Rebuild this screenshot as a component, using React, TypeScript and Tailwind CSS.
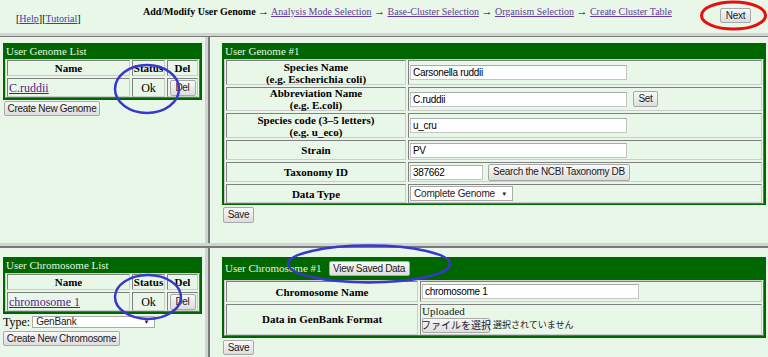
import React from "react";

const SANS = "font-['Liberation_Sans','Noto_Sans_CJK_JP',Arial,sans-serif]";

function Btn({ className = "", children }: { className?: string; children?: React.ReactNode }) {
  return (
    <button
      className={`flex shrink-0 items-center justify-center whitespace-nowrap rounded-[2px] border border-[#a8a8a8] bg-linear-to-b from-[#f9f9f9] to-[#dddddd] p-0 text-[10px] leading-none tracking-[-0.3px] text-[#1a1a1a] font-['Liberation_Sans','Noto_Sans_CJK_JP',Arial,sans-serif] ${className}`}
    >
      {children}
    </button>
  );
}

function Input({ value, className = "" }: { value: string; className?: string }) {
  return (
    <input
      readOnly
      value={value}
      className={`block shrink-0 border border-[#c4c4c4] border-t-[#aaaaaa] bg-white px-[2px] text-[10px] tracking-[-0.3px] text-black outline-none font-['Liberation_Sans',Arial,sans-serif] ${className}`}
    />
  );
}

function Select({ value, className = "" }: { value: string; className?: string }) {
  return (
    <div
      className={`flex shrink-0 items-center justify-between border border-[#aaaaaa] bg-white pl-[3px] pr-[5px] text-[10px] tracking-[-0.2px] text-[#222] font-['Liberation_Sans',Arial,sans-serif] ${className}`}
    >
      <span>{value}</span>
      <span className="text-[6px] leading-none">▼</span>
    </div>
  );
}

function Cell({ className = "", children }: { className?: string; children?: React.ReactNode }) {
  return (
    <div
      className={`flex items-center border border-t-[#808080] border-l-[#808080] border-b-[#cccccc] border-r-[#cccccc] ${className}`}
    >
      {children}
    </div>
  );
}

function TableBox({ className = "", children }: { className?: string; children?: React.ReactNode }) {
  return (
    <div
      className={`flex flex-col gap-[2px] border border-t-[#cccccc] border-l-[#cccccc] border-b-[#6a6a6a] border-r-[#6a6a6a] bg-[#e8f7e8] ${className}`}
    >
      {children}
    </div>
  );
}

function PanelHeader({ children }: { children: React.ReactNode }) {
  return <div className="h-[16px] pl-[1px] text-[11px] leading-[16px] text-[#e4f4e4]">{children}</div>;
}

function ListPanel({ title, name }: { title: string; name: string }) {
  return (
    <div className="w-[199px] bg-[#006600] px-[2px] pb-[2px]">
      <PanelHeader>{title}</PanelHeader>
      <TableBox className="px-[1px]">
        <div className="flex gap-[2px]">
          <Cell className="h-[16px] w-[123px] justify-center text-[11px] font-bold">Name</Cell>
          <Cell className="h-[16px] w-[33px] justify-center overflow-visible whitespace-nowrap text-[11px] font-bold">
            Status
          </Cell>
          <Cell className="h-[16px] w-[31px] justify-center text-[11px] font-bold">Del</Cell>
        </div>
        <div className="flex gap-[2px]">
          <Cell className="h-[19px] w-[123px] justify-start pl-[1px] text-[12px]">
            <a className="text-[#551a8b] underline">{name}</a>
          </Cell>
          <Cell className="h-[19px] w-[33px] justify-center text-[12px]">Ok</Cell>
          <Cell className="h-[19px] w-[31px] justify-center">
            <Btn className="h-[16px] w-[26px]">Del</Btn>
          </Cell>
        </div>
      </TableBox>
    </div>
  );
}

function FormRow({
  label,
  labelW,
  h,
  children,
}: {
  label: React.ReactNode;
  labelW: string;
  h: string;
  children?: React.ReactNode;
}) {
  return (
    <div className="flex gap-[2px]">
      <Cell className={`${labelW} ${h} justify-center text-center text-[11px] font-bold leading-[12px]`}>
        <div>{label}</div>
      </Cell>
      <Cell className={`${h} flex-1 gap-[6px] pl-[1px]`}>{children}</Cell>
    </div>
  );
}

export default function App() {
  return (
    <div className="relative flex h-[357px] w-[768px] flex-col overflow-hidden bg-[#e8f7e8] font-['Liberation_Serif',serif] text-black">
      {/* top frame */}
      <div className="flex h-[33px] shrink-0 items-start">
        <div className="w-[143px] shrink-0 pl-[16px] pt-[13px] text-[10px] leading-[12px]">
          [<a className="text-[#3a3ac8] underline">Help</a>][<a className="text-[#3a3ac8] underline">Tutorial</a>]
        </div>
        <div className="whitespace-nowrap pt-[5px] text-[10px] leading-[12px]">
          <b>Add/Modify User Genome</b> <span className="text-[11px]">→</span>{" "}
          <a className="text-[#5e3c9e] underline">Analysis Mode Selection</a> <span className="text-[11px]">→</span>{" "}
          <a className="text-[#5e3c9e] underline">Base-Cluster Selection</a> <span className="text-[11px]">→</span>{" "}
          <a className="text-[#5e3c9e] underline">Organism Selection</a> <span className="text-[11px]">→</span>{" "}
          <a className="text-[#5e3c9e] underline">Create Cluster Table</a>
        </div>
        <Btn className="ml-auto mr-[17px] mt-[8px] h-[15px] w-[31px]">Next</Btn>
      </div>
      <div className="h-[4px] shrink-0 border-b border-[#7a7a7a] bg-[#d3d3d3]" />

      {/* middle row */}
      <div className="flex h-[206px] shrink-0">
        <div className="flex w-[205px] shrink-0 flex-col items-start pl-[3px] pt-[6px]">
          <ListPanel title="User Genome List" name="C.ruddii" />
          <Btn className="ml-[1px] mt-[1px] h-[15px] w-[96px]">Create New Genome</Btn>
        </div>
        <div className="w-[5px] shrink-0 border-r-2 border-[#7a7a7a] bg-[#d3d3d3]" />
        <div className="flex flex-1 flex-col items-start pl-[12px] pt-[6px]">
          <div className="w-[544px] bg-[#006600] px-[2px] pb-[1px]">
            <PanelHeader>User Genome #1</PanelHeader>
            <TableBox className="px-[1px]">
              <FormRow
                labelW="w-[180px]"
                h="h-[25px]"
                label={
                  <>
                    Species Name
                    <br />
                    (e.g. Escherichia coli)
                  </>
                }
              >
                <Input value="Carsonella ruddii" className="h-[15px] w-[217px]" />
              </FormRow>
              <FormRow
                labelW="w-[180px]"
                h="h-[24px]"
                label={
                  <>
                    Abbreviation Name
                    <br />
                    (e.g. E.coli)
                  </>
                }
              >
                <Input value="C.ruddii" className="h-[15px] w-[217px]" />
                <Btn className="h-[16px] w-[25px]">Set</Btn>
              </FormRow>
              <FormRow
                labelW="w-[180px]"
                h="h-[25px]"
                label={
                  <>
                    Species code (3–5 letters)
                    <br />
                    (e.g. u_eco)
                  </>
                }
              >
                <Input value="u_cru" className="h-[15px] w-[217px]" />
              </FormRow>
              <FormRow labelW="w-[180px]" h="h-[20px]" label="Strain">
                <Input value="PV" className="h-[15px] w-[217px]" />
              </FormRow>
              <FormRow labelW="w-[180px]" h="h-[20px]" label="Taxonomy ID">
                <Input value="387662" className="h-[15px] w-[73px]" />
                <Btn className="-ml-[1px] h-[17px] w-[142px]">Search the NCBI Taxonomy DB</Btn>
              </FormRow>
              <FormRow labelW="w-[180px]" h="h-[19px]" label="Data Type">
                <Select value="Complete Genome" className="h-[15px] w-[103px]" />
              </FormRow>
            </TableBox>
          </div>
          <Btn className="ml-[1px] mt-[2px] h-[16px] w-[31px]">Save</Btn>
        </div>
      </div>

      <div className="h-[5px] shrink-0 border-b-2 border-[#7a7a7a] bg-[#d3d3d3]" />

      {/* bottom row */}
      <div className="flex flex-1">
        <div className="flex w-[205px] shrink-0 flex-col items-start pl-[3px] pt-[9px]">
          <ListPanel title="User Chromosome List" name="chromosome 1" />
          <div className="mt-[2px] flex items-center gap-[2px] text-[12px] leading-[12px]">
            <span>Type:</span>
            <Select value="GenBank" className="h-[12px] w-[123px]" />
          </div>
          <Btn className="mt-[3px] h-[15px] w-[117px]">Create New Chromosome</Btn>
        </div>
        <div className="w-[5px] shrink-0 border-r-2 border-[#7a7a7a] bg-[#d3d3d3]" />
        <div className="flex flex-1 flex-col items-start pl-[12px] pt-[9px]">
          <div className="w-[544px] bg-[#006600] px-[2px] pb-[2px]">
            <div className="flex h-[23px] items-center gap-[7px] pl-[1px] text-[11px] text-[#e4f4e4]">
              <span>User Chromosome #1</span>
              <Btn className="h-[15px] w-[81px]">View Saved Data</Btn>
            </div>
            <TableBox className="px-[1px]">
              <FormRow labelW="w-[192px]" h="h-[21px]" label="Chromosome Name">
                <Input value="chromosome 1" className="h-[15px] w-[217px]" />
              </FormRow>
              <div className="flex gap-[2px]">
                <Cell className="h-[31px] w-[192px] justify-center text-[11px] font-bold">Data in GenBank Format</Cell>
                <Cell className="h-[31px] flex-1 flex-col items-start justify-start pl-[1px]">
                  <div className="text-[11px] leading-[12px] text-[#222]">Uploaded</div>
                  <div className={`mt-[1px] flex items-center gap-[3px] ${SANS} text-[9px]`}>
                    <Btn className="h-[15px] w-[68px] text-[9px] tracking-normal">ファイルを選択</Btn>
                    <span className="text-[9px] text-[#222]">選択されていません</span>
                  </div>
                </Cell>
              </div>
            </TableBox>
          </div>
          <Btn className="ml-[1px] mt-[2px] h-[15px] w-[31px]">Save</Btn>
        </div>
      </div>

      {/* annotation ellipses */}
      <svg className="pointer-events-none absolute left-0 top-0" width="768" height="357" viewBox="0 0 768 357">
        <ellipse cx="733.5" cy="15.5" rx="32" ry="13.5" fill="none" stroke="#e41010" strokeWidth="3" />
        <ellipse cx="147" cy="89" rx="32" ry="24" fill="none" stroke="#3838cc" strokeWidth="2.5" />
        <ellipse cx="148" cy="297" rx="33" ry="22" fill="none" stroke="#3838cc" strokeWidth="2.5" />
        <ellipse cx="369" cy="264" rx="81" ry="18.5" fill="none" stroke="#3838cc" strokeWidth="2.5" />
      </svg>
    </div>
  );
}
